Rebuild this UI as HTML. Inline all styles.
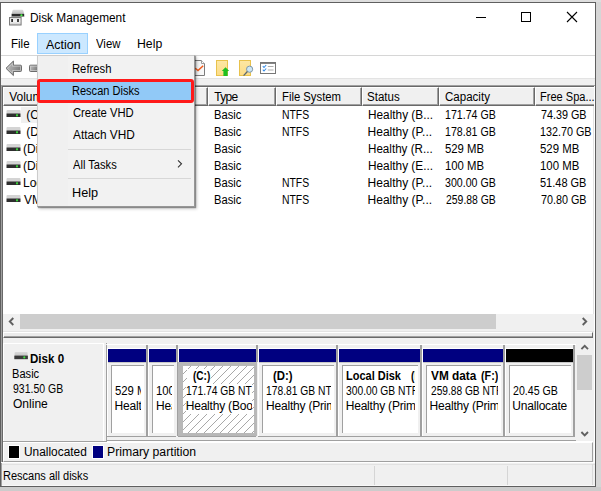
<!DOCTYPE html>
<html><head><meta charset="utf-8">
<style>
*{margin:0;padding:0;box-sizing:border-box}
html,body{width:601px;height:491px;overflow:hidden;background:#dedede}
body{position:relative;font-family:"Liberation Sans",sans-serif;font-size:12px;color:#000}
.a{position:absolute}
.t{position:absolute;white-space:nowrap;line-height:15px}
#win{position:absolute;left:0;top:2px;width:596px;height:485px;background:#fff;border:1px solid #5f5f5f;border-left-width:1px}
#shadowr{position:absolute;left:596px;top:2px;width:5px;height:489px;background:#d6d6d6}
#shadowb{position:absolute;left:0;top:487px;width:601px;height:4px;background:#cccccc}
.hdr{position:absolute;top:87px;height:19px;background:#f0f0f0;border-left:1px solid #fff;border-top:1px solid #fff;border-right:1px solid #696969;border-bottom:1px solid #696969;box-shadow:inset -1px -1px 0 #a0a0a0}
.hdr span{position:absolute;left:7px;top:2px;line-height:15px;white-space:nowrap}
.row{position:absolute;line-height:17px;height:17px;white-space:nowrap}
.sep{position:absolute;height:1px;background:#d7d7d7}
.bar{position:absolute;top:349px;height:13px;background:#000080}
.box{position:absolute;top:365px;height:68px;background:#fff;border-top:1px solid #a0a0a0;border-left:1px solid #a0a0a0;overflow:hidden}
.box div{position:absolute;left:4px;white-space:nowrap;line-height:15px}
.gline{position:absolute;background:#a0a0a0}
.wline{position:absolute;background:#fff}
b{font-weight:bold}
</style></head><body>
<div id="shadowr"></div><div id="shadowb"></div>
<div id="win"></div>

<!-- title bar -->
<svg class="a" style="left:9px;top:9px" width="17" height="17" viewBox="0 0 17 17">
  <defs><linearGradient id="dg" x1="0" y1="0" x2="0" y2="1"><stop offset="0" stop-color="#dcdcdc"/><stop offset="1" stop-color="#bcbcbc"/></linearGradient>
  <linearGradient id="fg" x1="0" y1="0" x2="0" y2="1"><stop offset="0" stop-color="#d8d8d8"/><stop offset="0.5" stop-color="#f8f8f8"/><stop offset="1" stop-color="#c8c8c8"/></linearGradient></defs>
  <path d="M3.6 1.2Q3.8 0.8 4.4 0.8H13.4Q14 0.8 14.2 1.2L15.2 4.9H2.6Z" fill="url(#dg)"/>
  <rect x="2.6" y="4.9" width="12.6" height="2.7" fill="#2b2b2b"/>
  <rect x="2.6" y="7.4" width="12.6" height="0.6" fill="#9a9a9a"/>
  <circle cx="12.4" cy="6.3" r="1.3" fill="#3ee03e" opacity="0.6"/>
  <circle cx="12.4" cy="6.3" r="0.8" fill="#50ff50"/>
  <rect x="0.5" y="8.5" width="11.6" height="7.5" fill="url(#fg)" stroke="#7c7c7c"/>
  <rect x="2.3" y="10" width="1.6" height="3" fill="#1a1a1a"/>
  <rect x="8.2" y="10" width="1.6" height="3" fill="#1a1a1a"/>
</svg>
<div class="a" style="left:476px;top:17px;width:10px;height:1px;background:#000"></div>
<div class="a" style="left:521px;top:12px;width:10px;height:10px;border:1px solid #000"></div>
<svg class="a" style="left:566px;top:11px" width="12" height="12" viewBox="0 0 12 12"><path d="M1 1L11 11M11 1L1 11" stroke="#000" stroke-width="1.1"/></svg>

<!-- menu bar -->
<div class="a" style="left:37px;top:33px;width:51px;height:21px;background:#cce8ff;border:1px solid #99d1ff"></div>
<div class="a" style="left:1px;top:55px;width:594px;height:1px;background:#d6d6d6"></div>

<!-- toolbar -->
<div class="a" style="left:1px;top:78px;width:594px;height:7px;background:#f0f0f0;border-top:1px solid #e3e3e3"></div>
<svg class="a" style="left:5px;top:60px" width="18" height="17" viewBox="0 0 18 17">
  <defs><linearGradient id="ag" x1="0" y1="0" x2="1" y2="0.3"><stop offset="0" stop-color="#c4c4c4"/><stop offset="1" stop-color="#7e7e7e"/></linearGradient></defs>
  <path d="M1 8.3L8.4 1V5.2H15.5Q16.5 5.2 16.5 6.2V10.5Q16.5 11.5 15.5 11.5H8.4V15.6Z" fill="url(#ag)" stroke="#6c6c6c" stroke-width="1"/>
  <path d="M2.5 8.3L7.4 3.4V6.2H15.5V10.5H7.4V13.2Z" fill="none" stroke="#d6d6d6" stroke-width="0.8" opacity="0.8"/>
</svg>
<svg class="a" style="left:28px;top:60px" width="10" height="17" viewBox="0 0 10 17">
  <path d="M10 5.2H2.5Q1.5 5.2 1.5 6.2V10.5Q1.5 11.5 2.5 11.5H10" fill="url(#ag)" stroke="#6c6c6c" stroke-width="1"/>
  <path d="M10 6.2H2.5V10.5H10" fill="none" stroke="#d6d6d6" stroke-width="0.8" opacity="0.8"/>
</svg>
<!-- doc check -->
<svg class="a" style="left:192px;top:60px" width="14" height="17" viewBox="0 0 14 17">
  <defs><linearGradient id="dcg" x1="0" y1="0" x2="1" y2="0"><stop offset="0" stop-color="#d8d8d8"/><stop offset="0.5" stop-color="#f4f4f4"/><stop offset="1" stop-color="#fafafa"/></linearGradient></defs>
  <path d="M0 0.5H9.5L12.5 3.5V15.5H0" fill="url(#dcg)" stroke="#7c7c7c"/>
  <path d="M9.5 0.5V3.5H12.5" fill="#fff" stroke="#9c9c9c"/>
  <path d="M3.3 8.2L6 10.6L11.2 5.8" fill="none" stroke="#ee5a1c" stroke-width="1.5"/>
</svg>
<svg class="a" style="left:215px;top:60px" width="16" height="17" viewBox="0 0 16 17">
  <defs><linearGradient id="yg" x1="0" y1="0" x2="0" y2="1"><stop offset="0" stop-color="#fde7a4"/><stop offset="1" stop-color="#fcdc86"/></linearGradient></defs>
  <rect x="1.5" y="0.5" width="11" height="15" fill="url(#yg)" stroke="#e8c24c"/>
  <path d="M10.5 7.2L14.2 11H12.6V16H8.4V11H6.8Z" fill="#1fbf1f"/>
</svg>
<svg class="a" style="left:238px;top:60px" width="16" height="17" viewBox="0 0 16 17">
  <rect x="1.5" y="0.5" width="11" height="15" fill="url(#yg)" stroke="#e8c24c"/>
  <circle cx="11.6" cy="9.2" r="3.1" fill="#cde6f5" stroke="#8098a8" stroke-width="1"/>
  <path d="M9.4 11.5L5.6 15.6" stroke="#5a6872" stroke-width="1.3"/>
</svg>
<svg class="a" style="left:260px;top:62px" width="17" height="13" viewBox="0 0 17 13">
  <rect x="0.5" y="0.5" width="15" height="11" fill="#fff" stroke="#777"/>
  <rect x="0.5" y="0.5" width="15" height="1.4" fill="#777"/>
  <path d="M2.8 4.2L4 5.5L6.2 3M2.8 7.7L4 9L6.2 6.5" fill="none" stroke="#3a8ee6" stroke-width="1.1"/>
  <path d="M7.8 4.5H13.5M7.8 8H13.5" stroke="#adadad"/>
</svg>

<!-- list view frame -->
<div class="a" style="left:1px;top:85px;width:594px;height:1px;background:#a0a0a0"></div>
<div class="a" style="left:1px;top:85px;width:1px;height:248px;background:#a0a0a0"></div>
<div class="a" style="left:2px;top:86px;width:592px;height:1px;background:#696969"></div>
<div class="a" style="left:2px;top:86px;width:1px;height:246px;background:#696969"></div>
<div class="a" style="left:3px;top:87px;width:592px;height:246px;background:#fff;border-right:1px solid #fff;border-bottom:1px solid #fff;box-shadow:inset -1px -1px 0 #e3e3e3"></div>

<!-- header -->
<div class="hdr" style="left:3px;width:205px"></div>
<div class="hdr" style="left:208px;width:68px"></div>
<div class="hdr" style="left:276px;width:86px"></div>
<div class="hdr" style="left:362px;width:77px"></div>
<div class="hdr" style="left:439px;width:96px"></div>
<div class="hdr" style="left:535px;width:59px;border-right:none;box-shadow:inset 0 -1px 0 #a0a0a0"></div>

<!-- rows -->
<div class="a" style="left:21px;top:107px;width:40px;height:16px;background:#f0f0f0"></div>
<div class="a" style="left:21px;top:107px;width:40px;height:16px;background:#f0f0f0"></div>
<svg class="a" style="left:6px;top:110px" width="15" height="8" viewBox="0 0 15 8"><rect x="0.5" y="0" width="14" height="4" rx="1" fill="#d4d4d4"/><rect x="0.5" y="3.5" width="14" height="3.5" fill="#2e2e2e"/><rect x="10" y="4.3" width="2" height="2" fill="#3ad03a"/></svg>
<svg class="a" style="left:6px;top:127px" width="15" height="8" viewBox="0 0 15 8"><rect x="0.5" y="0" width="14" height="4" rx="1" fill="#d4d4d4"/><rect x="0.5" y="3.5" width="14" height="3.5" fill="#2e2e2e"/><rect x="10" y="4.3" width="2" height="2" fill="#3ad03a"/></svg>
<svg class="a" style="left:6px;top:144px" width="15" height="8" viewBox="0 0 15 8"><rect x="0.5" y="0" width="14" height="4" rx="1" fill="#d4d4d4"/><rect x="0.5" y="3.5" width="14" height="3.5" fill="#2e2e2e"/><rect x="10" y="4.3" width="2" height="2" fill="#3ad03a"/></svg>
<svg class="a" style="left:6px;top:161px" width="15" height="8" viewBox="0 0 15 8"><rect x="0.5" y="0" width="14" height="4" rx="1" fill="#d4d4d4"/><rect x="0.5" y="3.5" width="14" height="3.5" fill="#2e2e2e"/><rect x="10" y="4.3" width="2" height="2" fill="#3ad03a"/></svg>
<svg class="a" style="left:6px;top:178px" width="15" height="8" viewBox="0 0 15 8"><rect x="0.5" y="0" width="14" height="4" rx="1" fill="#d4d4d4"/><rect x="0.5" y="3.5" width="14" height="3.5" fill="#2e2e2e"/><rect x="10" y="4.3" width="2" height="2" fill="#3ad03a"/></svg>
<svg class="a" style="left:6px;top:195px" width="15" height="8" viewBox="0 0 15 8"><rect x="0.5" y="0" width="14" height="4" rx="1" fill="#d4d4d4"/><rect x="0.5" y="3.5" width="14" height="3.5" fill="#2e2e2e"/><rect x="10" y="4.3" width="2" height="2" fill="#3ad03a"/></svg>

<!-- h scrollbar -->
<div class="a" style="left:3px;top:314px;width:591px;height:17px;background:#f0f0f0"></div>
<div class="a" style="left:20px;top:314px;width:476px;height:15px;background:#cdcdcd"></div>
<svg class="a" style="left:6px;top:316px" width="10" height="11" viewBox="0 0 10 11"><path d="M7.3 2L3.8 5.5L7.3 9" fill="none" stroke="#606060" stroke-width="1.9"/></svg>
<svg class="a" style="left:580px;top:316px" width="10" height="11" viewBox="0 0 10 11"><path d="M2.7 2L6.2 5.5L2.7 9" fill="none" stroke="#606060" stroke-width="1.9"/></svg>

<!-- splitter -->
<div class="a" style="left:1px;top:332px;width:1px;height:130px;background:#a0a0a0"></div>
<div class="a" style="left:2px;top:332px;width:1px;height:130px;background:#696969"></div>
<div class="a" style="left:3px;top:332px;width:590px;height:6px;background:#ebebeb;border-top:1px solid #fff;border-left:1px solid #fff;border-right:1px solid #696969;border-bottom:1px solid #696969;box-shadow:inset 0 -1px 0 #a0a0a0"></div>
<div class="a" style="left:593px;top:332px;width:1px;height:130px;background:#f0f0f0"></div>
<div class="a" style="left:594px;top:332px;width:1px;height:130px;background:#fff"></div>

<!-- graphical pane -->
<div class="a" style="left:3px;top:338px;width:590px;height:103px;background:#f0f0f0"></div>

<!-- disk label box -->
<div class="a" style="left:3px;top:343px;width:101px;height:98px;border-top:1px solid #fff;border-left:1px solid #fff;border-right:1px solid #fff"></div>
<div class="a" style="left:3px;top:441px;width:104px;height:1px;background:#a0a0a0"></div>
<svg class="a" style="left:14px;top:352px" width="15" height="8" viewBox="0 0 15 8">
  <defs><linearGradient id="lg" x1="0" y1="0" x2="0" y2="1"><stop offset="0" stop-color="#dadada"/><stop offset="1" stop-color="#c4c4c4"/></linearGradient></defs>
  <rect x="0.6" y="0" width="13" height="4" rx="1" fill="url(#lg)"/>
  <rect x="0.3" y="3.6" width="13.6" height="3.6" fill="#3a3a3a"/>
  <circle cx="10.3" cy="5.4" r="1.1" fill="#3fe03f"/>
</svg>

<!-- partitions container -->
<div class="a" style="left:107px;top:344px;width:469px;height:1px;background:#fff"></div>
<div class="a" style="left:106px;top:343px;width:1px;height:1px;background:#a0a0a0"></div>
<div class="a" style="left:106px;top:345px;width:1px;height:96px;background:#a0a0a0"></div>
<div class="a" style="left:106px;top:440px;width:470px;height:1px;background:#a0a0a0"></div>
<div class="bar" style="left:108px;width:38px;background:#000080"></div>
<div class="gline" style="left:146px;top:345px;width:2px;height:92px"></div>
<div class="wline" style="left:107px;top:348px;width:1px;height:88px"></div>
<div class="wline" style="left:107px;top:348px;width:39px;height:1px"></div>
<div class="gline" style="left:107px;top:436px;width:39px;height:1px"></div>
<div class="a" style="left:108px;top:362px;width:38px;height:1px;background:#c8c8c8"></div>
<div class="a" style="left:111px;top:365px;width:33px;height:68px;background:#fff;border-top:1px solid #a0a0a0;border-left:1px solid #a0a0a0;overflow:hidden">
<div class="a" style="left:0;top:0;width:29px;height:68px;overflow:hidden">
<div class="t" style="left:2.66px;top:18px;transform:scaleX(0.9450);transform-origin:0 0">529 MB</div>
<div class="t" style="left:2.60px;top:33px;letter-spacing:-0.200px">Healthy (Recovery Partition)</div>
</div></div>
<div class="bar" style="left:149px;width:27px;background:#000080"></div>
<div class="gline" style="left:176px;top:345px;width:2px;height:17px"></div>
<div class="wline" style="left:148px;top:348px;width:1px;height:88px"></div>
<div class="wline" style="left:148px;top:348px;width:28px;height:1px"></div>
<div class="gline" style="left:148px;top:436px;width:28px;height:1px"></div>
<div class="a" style="left:149px;top:362px;width:27px;height:1px;background:#c8c8c8"></div>
<div class="a" style="left:152px;top:365px;width:22px;height:68px;background:#fff;border-top:1px solid #a0a0a0;border-left:1px solid #a0a0a0;overflow:hidden">
<div class="a" style="left:0;top:0;width:18.5px;height:68px;overflow:hidden">
<div class="t" style="left:3.06px;top:18px;transform:scaleX(0.9450);transform-origin:0 0">100 MB</div>
<div class="t" style="left:3.00px;top:33px;letter-spacing:-0.200px">Healthy (EFI System Partition)</div>
</div></div>
<div class="bar" style="left:179px;width:77px;background:#000080"></div>
<div class="gline" style="left:256px;top:345px;width:2px;height:17px"></div>
<div class="wline" style="left:178px;top:348px;width:1px;height:88px"></div>
<div class="wline" style="left:178px;top:348px;width:78px;height:1px"></div>
<div class="gline" style="left:178px;top:436px;width:78px;height:1px"></div>
<div class="a" style="left:179px;top:362px;width:77px;height:1px;background:#c8c8c8"></div>
<div class="a" style="left:177px;top:362px;width:80px;height:74px;background:#b8b8b8;border-left:1px solid #a0a0a0"></div>
<div class="a" style="left:183px;top:366px;width:71px;height:67px;background:#fff;overflow:hidden"><svg class="a" style="left:0;top:0" width="71" height="67"><defs><pattern id="hp" x="6" y="2" width="8" height="8" patternUnits="userSpaceOnUse"><path d="M7 0h1v1h-1zM6 1h1v1h-1zM5 2h1v1h-1zM4 3h1v1h-1zM3 4h1v1h-1zM2 5h1v1h-1zM1 6h1v1h-1zM0 7h1v1h-1z" fill="#a8a8a8"/></pattern></defs><rect width="71" height="67" fill="url(#hp)"/></svg>
<div class="a" style="left:0;top:0;width:69px;height:67px;overflow:hidden">
<div class="a" style="left:4px;top:3px;width:7px;height:15px;background:#fff"></div>
<div class="t" style="left:9.70px;top:3px;transform:scaleX(0.8350);transform-origin:0 0;font-weight:bold;background:#fff;line-height:15px">(C:)</div>
<div class="t" style="left:2.84px;top:18px;transform:scaleX(0.8571);transform-origin:0 0;background:#fff;line-height:15px">171.74 GB NTFS</div>
<div class="t" style="left:2.70px;top:33px;letter-spacing:-0.200px;background:#fff;line-height:15px">Healthy (Boot, Page File, Crash Dump, Primary Partition)</div>
</div></div>
<div class="bar" style="left:259px;width:77px;background:#000080"></div>
<div class="gline" style="left:336px;top:345px;width:2px;height:92px"></div>
<div class="wline" style="left:258px;top:348px;width:1px;height:88px"></div>
<div class="wline" style="left:258px;top:348px;width:78px;height:1px"></div>
<div class="gline" style="left:258px;top:436px;width:78px;height:1px"></div>
<div class="a" style="left:259px;top:362px;width:77px;height:1px;background:#c8c8c8"></div>
<div class="a" style="left:262px;top:365px;width:72px;height:68px;background:#fff;border-top:1px solid #a0a0a0;border-left:1px solid #a0a0a0;overflow:hidden">
<div class="a" style="left:0;top:0;width:67.5px;height:68px;overflow:hidden">
<div class="t" style="left:9.70px;top:3px;transform:scaleX(0.9500);transform-origin:0 0;font-weight:bold">(D:)</div>
<div class="t" style="left:3.14px;top:18px;transform:scaleX(0.8571);transform-origin:0 0">178.81 GB NTFS</div>
<div class="t" style="left:3.00px;top:33px;letter-spacing:-0.200px">Healthy (Primary Partition)</div>
</div></div>
<div class="bar" style="left:339px;width:81px;background:#000080"></div>
<div class="gline" style="left:420px;top:345px;width:2px;height:92px"></div>
<div class="wline" style="left:338px;top:348px;width:1px;height:88px"></div>
<div class="wline" style="left:338px;top:348px;width:82px;height:1px"></div>
<div class="gline" style="left:338px;top:436px;width:82px;height:1px"></div>
<div class="a" style="left:339px;top:362px;width:81px;height:1px;background:#c8c8c8"></div>
<div class="a" style="left:342px;top:365px;width:76px;height:68px;background:#fff;border-top:1px solid #a0a0a0;border-left:1px solid #a0a0a0;overflow:hidden">
<div class="a" style="left:0;top:0;width:72px;height:68px;overflow:hidden">
<div class="t" style="left:2.78px;top:3px;transform:scaleX(0.9153);transform-origin:0 0;font-weight:bold">Local Disk</div>
<div class="t" style="left:67.60px;top:3px;transform:scaleX(0.8500);transform-origin:0 0;font-weight:bold">(E:)</div>
<div class="t" style="left:2.84px;top:18px;transform:scaleX(0.8571);transform-origin:0 0">300.00 GB NTFS</div>
<div class="t" style="left:2.70px;top:33px;letter-spacing:-0.200px">Healthy (Primary Partition)</div>
</div></div>
<div class="bar" style="left:423px;width:80px;background:#000080"></div>
<div class="gline" style="left:503px;top:345px;width:2px;height:92px"></div>
<div class="wline" style="left:422px;top:348px;width:1px;height:88px"></div>
<div class="wline" style="left:422px;top:348px;width:81px;height:1px"></div>
<div class="gline" style="left:422px;top:436px;width:81px;height:1px"></div>
<div class="a" style="left:423px;top:362px;width:80px;height:1px;background:#c8c8c8"></div>
<div class="a" style="left:426px;top:365px;width:75px;height:68px;background:#fff;border-top:1px solid #a0a0a0;border-left:1px solid #a0a0a0;overflow:hidden">
<div class="a" style="left:0;top:0;width:71px;height:68px;overflow:hidden">
<div class="t" style="left:3.50px;top:3px;transform:scaleX(0.9848);transform-origin:0 0;font-weight:bold">VM data</div>
<div class="t" style="left:53.60px;top:3px;transform:scaleX(0.8947);transform-origin:0 0;font-weight:bold">(F:)</div>
<div class="t" style="left:3.50px;top:18px;transform:scaleX(0.8478);transform-origin:0 0">259.88 GB NTFS</div>
<div class="t" style="left:2.50px;top:33px;letter-spacing:-0.200px">Healthy (Primary Partition)</div>
</div></div>
<div class="bar" style="left:506px;width:67px;background:#000"></div>
<div class="gline" style="left:573px;top:345px;width:2px;height:92px"></div>
<div class="wline" style="left:505px;top:348px;width:1px;height:88px"></div>
<div class="wline" style="left:505px;top:348px;width:68px;height:1px"></div>
<div class="gline" style="left:505px;top:436px;width:68px;height:1px"></div>
<div class="a" style="left:506px;top:362px;width:67px;height:1px;background:#c8c8c8"></div>
<div class="a" style="left:509px;top:365px;width:62px;height:68px;background:#fff;border-top:1px solid #a0a0a0;border-left:1px solid #a0a0a0;overflow:hidden">
<div class="a" style="left:0;top:0;width:57px;height:68px;overflow:hidden">
<div class="t" style="left:3.30px;top:18px;transform:scaleX(0.8840);transform-origin:0 0">20.45 GB</div>
<div class="t" style="left:2.30px;top:33px;letter-spacing:-0.200px">Unallocated</div>
</div></div>

<!-- v scrollbar -->
<div class="a" style="left:577px;top:338px;width:16px;height:103px;background:#f0f0f0"></div>
<div class="a" style="left:577px;top:355px;width:15px;height:35px;background:#cdcdcd"></div>
<svg class="a" style="left:579px;top:342px" width="12" height="10" viewBox="0 0 12 10"><path d="M2.4 7.2L5.7 3.9L9 7.2" fill="none" stroke="#606060" stroke-width="1.9"/></svg>
<svg class="a" style="left:579px;top:428px" width="12" height="10" viewBox="0 0 12 10"><path d="M2.4 4L5.7 7.3L9 4" fill="none" stroke="#606060" stroke-width="1.9"/></svg>

<!-- legend -->
<div class="a" style="left:3px;top:442px;width:590px;height:20px;background:#f0f0f0;border-top:1px solid #fff;border-left:1px solid #fff;border-bottom:1px solid #a0a0a0;border-right:1px solid #a0a0a0"></div>
<div class="a" style="left:8px;top:445px;width:12px;height:14px;background:#000;border:1px solid #fff"></div>
<div class="a" style="left:92px;top:445px;width:12px;height:14px;background:#000080;border:1px solid #fff"></div>

<!-- status bar -->
<div class="a" style="left:1px;top:462px;width:594px;height:24px;background:#f0f0f0;border-top:1px solid #fff"></div>
<div class="a" style="left:2px;top:464px;width:593px;height:1px;background:#e2e2e2"></div>
<div class="a" style="left:2px;top:485px;width:593px;height:1px;background:#f8f8f8"></div>
<div class="a" style="left:1px;top:463px;width:1px;height:23px;background:#a0a0a0"></div>
<div class="a" style="left:592px;top:464px;width:1px;height:21px;background:#d9d9d9"></div>
<div class="a" style="left:374px;top:466px;width:1px;height:19px;background:#d5d5d5"></div>
<div class="a" style="left:507px;top:466px;width:1px;height:19px;background:#d5d5d5"></div>

<!-- dropdown menu -->
<div class="t" style="left:29.91px;top:11px;transform:scaleX(0.9875);transform-origin:0 0">Disk Management</div>
<div class="t" style="left:10.74px;top:37px;transform:scaleX(0.9611);transform-origin:0 0">File</div>
<div class="t" style="left:46.00px;top:38px;transform:scaleX(1.0364);transform-origin:0 0">Action</div>
<div class="t" style="left:96.00px;top:37px;transform:scaleX(0.9462);transform-origin:0 0">View</div>
<div class="t" style="left:136.68px;top:37px;transform:scaleX(1.0217);transform-origin:0 0">Help</div>
<div class="t" style="left:9.20px;top:90px;letter-spacing:0.000px">Volume</div>
<div class="t" style="left:214.30px;top:90px;letter-spacing:-0.693px">Type</div>
<div class="t" style="left:281.56px;top:90px;transform:scaleX(0.9410);transform-origin:0 0">File System</div>
<div class="t" style="left:367.34px;top:90px;transform:scaleX(0.9606);transform-origin:0 0">Status</div>
<div class="t" style="left:445.30px;top:90px;transform:scaleX(0.9617);transform-origin:0 0">Capacity</div>
<div class="t" style="left:540.08px;top:90px;transform:scaleX(0.9211);transform-origin:0 0">Free Spa...</div>
<div class="t" style="left:26.20px;top:108px;letter-spacing:0.000px">(C:)</div>
<div class="t" style="left:213.77px;top:108px;transform:scaleX(0.9286);transform-origin:0 0">Basic</div>
<div class="t" style="left:281.53px;top:108px;transform:scaleX(0.8667);transform-origin:0 0">NTFS</div>
<div class="t" style="left:367.62px;top:108px;transform:scaleX(0.9844);transform-origin:0 0">Healthy (B...</div>
<div class="t" style="left:444.62px;top:108px;transform:scaleX(0.8839);transform-origin:0 0">171.74 GB</div>
<div class="t" style="left:541.00px;top:108px;transform:scaleX(0.8980);transform-origin:0 0">74.39 GB</div>
<div class="t" style="left:26.20px;top:125px;letter-spacing:0.000px">(D:)</div>
<div class="t" style="left:213.77px;top:125px;transform:scaleX(0.9286);transform-origin:0 0">Basic</div>
<div class="t" style="left:281.53px;top:125px;transform:scaleX(0.8667);transform-origin:0 0">NTFS</div>
<div class="t" style="left:367.60px;top:125px;transform:scaleX(1.0000);transform-origin:0 0">Healthy (P...</div>
<div class="t" style="left:444.62px;top:125px;transform:scaleX(0.8839);transform-origin:0 0">178.81 GB</div>
<div class="t" style="left:540.10px;top:125px;transform:scaleX(0.8964);transform-origin:0 0">132.70 GB</div>
<div class="t" style="left:23.00px;top:142px;letter-spacing:0.000px">(Disk 0 partition 2)</div>
<div class="t" style="left:213.77px;top:142px;transform:scaleX(0.9286);transform-origin:0 0">Basic</div>
<div class="t" style="left:367.63px;top:142px;transform:scaleX(0.9692);transform-origin:0 0">Healthy (R...</div>
<div class="t" style="left:444.56px;top:142px;transform:scaleX(0.9450);transform-origin:0 0">529 MB</div>
<div class="t" style="left:540.05px;top:142px;transform:scaleX(0.9500);transform-origin:0 0">529 MB</div>
<div class="t" style="left:23.00px;top:159px;letter-spacing:0.000px">(Disk 0 partition 3)</div>
<div class="t" style="left:213.77px;top:159px;transform:scaleX(0.9286);transform-origin:0 0">Basic</div>
<div class="t" style="left:367.62px;top:159px;transform:scaleX(0.9844);transform-origin:0 0">Healthy (E...</div>
<div class="t" style="left:444.56px;top:159px;transform:scaleX(0.9450);transform-origin:0 0">100 MB</div>
<div class="t" style="left:540.05px;top:159px;transform:scaleX(0.9500);transform-origin:0 0">100 MB</div>
<div class="t" style="left:23.00px;top:176px;letter-spacing:0.000px">Local Disk (E:)</div>
<div class="t" style="left:213.77px;top:176px;transform:scaleX(0.9286);transform-origin:0 0">Basic</div>
<div class="t" style="left:281.53px;top:176px;transform:scaleX(0.8667);transform-origin:0 0">NTFS</div>
<div class="t" style="left:367.60px;top:176px;transform:scaleX(1.0000);transform-origin:0 0">Healthy (P...</div>
<div class="t" style="left:444.62px;top:176px;transform:scaleX(0.8839);transform-origin:0 0">300.00 GB</div>
<div class="t" style="left:540.08px;top:176px;transform:scaleX(0.9163);transform-origin:0 0">51.48 GB</div>
<div class="t" style="left:24.00px;top:193px;letter-spacing:0.000px">VM data (F:)</div>
<div class="t" style="left:213.77px;top:193px;transform:scaleX(0.9286);transform-origin:0 0">Basic</div>
<div class="t" style="left:281.53px;top:193px;transform:scaleX(0.8667);transform-origin:0 0">NTFS</div>
<div class="t" style="left:367.60px;top:193px;transform:scaleX(1.0000);transform-origin:0 0">Healthy (P...</div>
<div class="t" style="left:445.50px;top:193px;transform:scaleX(0.8684);transform-origin:0 0">259.88 GB</div>
<div class="t" style="left:541.00px;top:193px;transform:scaleX(0.8980);transform-origin:0 0">70.80 GB</div>
<div class="t" style="left:29.64px;top:352px;transform:scaleX(0.9647);transform-origin:0 0;font-weight:bold">Disk 0</div>
<div class="t" style="left:11.57px;top:367px;transform:scaleX(0.9250);transform-origin:0 0">Basic</div>
<div class="t" style="left:12.50px;top:382px;transform:scaleX(0.8737);transform-origin:0 0">931.50 GB</div>
<div class="t" style="left:12.50px;top:397px;transform:scaleX(1.0029);transform-origin:0 0">Online</div>
<div class="t" style="left:23.51px;top:445px;transform:scaleX(0.9903);transform-origin:0 0">Unallocated</div>
<div class="t" style="left:107.28px;top:445px;transform:scaleX(1.0198);transform-origin:0 0">Primary partition</div>
<div class="t" style="left:2.78px;top:469px;transform:scaleX(0.9185);transform-origin:0 0">Rescans all disks</div>
<div class="a" style="left:37px;top:55px;width:158px;height:152px;background:#f2f2f2;border:1px solid #cccccc;border-right-color:#979797;border-bottom-color:#979797;box-shadow:1px 1px 1px rgba(0,0,0,0.35), 2px 2px 3px rgba(0,0,0,0.2)"></div>
<div class="a" style="left:38px;top:56px;width:30px;height:150px;background:#f0f0f0"></div>
<div class="a" style="left:37px;top:79px;width:157px;height:24px;background:#91c9f7;border:3px solid #ff1a1a;border-radius:3px"></div>
<div class="t" style="left:72.36px;top:62px;transform:scaleX(0.9375);transform-origin:0 0">Refresh</div>
<div class="t" style="left:71.88px;top:84px;transform:scaleX(0.9194);transform-origin:0 0">Rescan Disks</div>
<div class="t" style="left:72.80px;top:106px;transform:scaleX(0.9375);transform-origin:0 0">Create VHD</div>
<div class="t" style="left:72.80px;top:128px;transform:scaleX(0.9839);transform-origin:0 0">Attach VHD</div>
<div class="t" style="left:72.80px;top:158px;transform:scaleX(0.9277);transform-origin:0 0">All Tasks</div>
<div class="t" style="left:71.94px;top:186px;transform:scaleX(1.0565);transform-origin:0 0">Help</div>
<div class="sep" style="left:68px;top:149px;width:123px"></div>
<div class="sep" style="left:68px;top:178px;width:123px"></div>
<svg class="a" style="left:176px;top:158px" width="8" height="11" viewBox="0 0 8 11"><path d="M2 2.3L5.5 5.8L2 9.3" fill="none" stroke="#333" stroke-width="1.1"/></svg>
</body></html>
